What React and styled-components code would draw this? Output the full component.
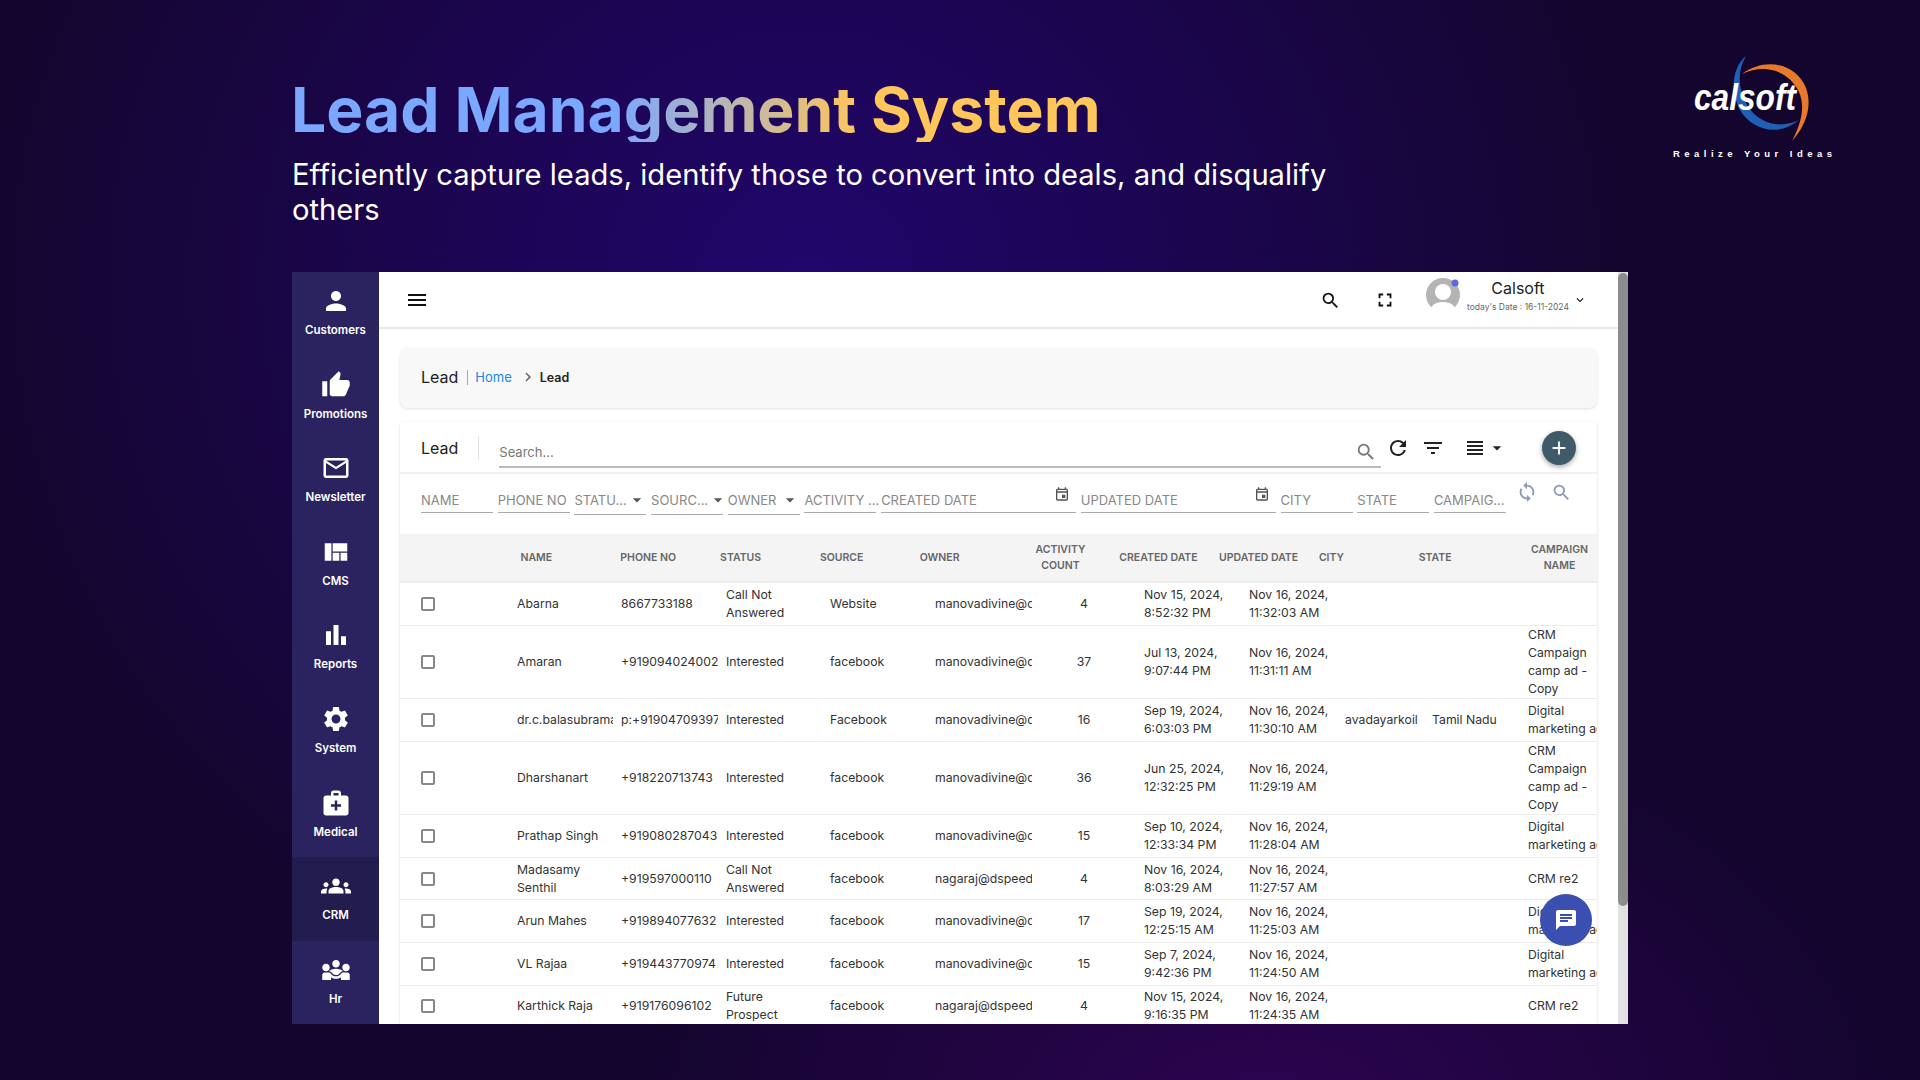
import React from "react"
import styled, { createGlobalStyle } from "styled-components"
import {
  MdMenu, MdSearch, MdFullscreen, MdKeyboardArrowDown, MdChevronRight, MdRefresh, MdFilterList,
  MdViewHeadline, MdArrowDropDown, MdAdd, MdSync, MdPerson, MdThumbUp, MdMailOutline, MdViewQuilt,
  MdBarChart, MdSettings, MdMedicalServices, MdGroups, MdDiversity3, MdChat, MdOutlineEvent,
} from "react-icons/md"

const GlobalStyle = createGlobalStyle`
  * { box-sizing: border-box; }
  body {
    margin: 0;
    font-family: Inter, "Liberation Sans", sans-serif;
    background: #14052f;
  }
`

const Page = styled.div`
  width: 1920px;
  height: 1080px;
  overflow: hidden;
  padding: 0 0 0 292px;
  background:
    radial-gradient(ellipse 620px 420px at 66% 104%, #2d0452 0%, rgba(45, 4, 82, 0) 100%),
    radial-gradient(ellipse 820px 760px at 42% 26%, #21066c 0%, rgba(33, 6, 108, 0) 100%),
    #14052f;
`
const Header = styled.header`
  height: 272px;
  display: flex;
  justify-content: space-between;
  align-items: flex-start;
`
const Intro = styled.div`
  padding-top: 78px;
  width: 1060px;
`
const Title = styled.h1`
  display: inline-block;
  margin: 0 0 0 -1px;
  font-size: 62.4px;
  line-height: 64px;
  font-weight: 700;
  color: transparent;
  background: linear-gradient(90deg, #7ba7ff 40%, #ffc65c 70%);
  -webkit-background-clip: text;
  background-clip: text;
`
const Subtitle = styled.p`
  margin: 15px 0 0;
  font-size: 29.15px;
  line-height: 35px;
  color: #fff;
`
const Logo = styled.svg`
  width: 240px;
  height: 150px;
  margin: 30px 40px 0 0;
  flex: none;
`
const Window = styled.div`
  position: relative;
  width: 1336px;
  height: 752px;
  display: flex;
  overflow: hidden;
  background: #fff;
`
const Sidebar = styled.nav`
  width: 87px;
  flex: none;
  background: #2b235f;
`
const SideItem = styled.div`
  height: 83.6px;
  display: flex;
  flex-direction: column;
  align-items: center;
  padding-top: 14px;
  color: #fff;
  background: ${(p) => (p.$active ? "#231c4e" : "transparent")};
  svg { font-size: 30px; }
  span {
    margin-top: 6px;
    font-size: 11.5px;
    line-height: 16px;
    font-weight: 600;
  }
`
const Main = styled.main`
  flex: 1;
  min-width: 0;
  overflow: hidden;
`
const Topbar = styled.div`
  height: 57px;
  display: flex;
  align-items: center;
  padding: 0 40px 0 26px;
  border-bottom: 2px solid #e8e8e8;
  color: #111;
`
const TopIcon = styled.div`
  display: flex;
  font-size: ${(p) => p.$size || 24}px;
  margin-left: ${(p) => p.$left || 0}px;
  padding-top: ${(p) => p.$drop || 0}px;
`
const Avatar = styled.svg`
  width: 36px;
  height: 32px;
  margin-left: 30px;
  margin-top: -12px;
  flex: none;
`
const User = styled.div`
  width: 102px;
  margin: -9px 0 0 5px;
  display: flex;
  flex-direction: column;
  align-items: center;
  b {
    font-size: 16px;
    line-height: 20px;
    font-weight: 400;
    color: #222;
  }
  span {
    margin-top: 3px;
    font-size: 8.5px;
    line-height: 12px;
    white-space: nowrap;
    color: #666;
  }
`
const Content = styled.div`
  padding: 19px 21px 0;
`
const Crumbs = styled.div`
  height: 60px;
  display: flex;
  align-items: center;
  padding: 0 0 2px 21px;
  background: #f8f8f8;
  border-radius: 8px;
  box-shadow: 0 1px 3px rgba(0, 0, 0, 0.12);
  color: #222;
  font-size: 16px;
`
const CrumbHome = styled.span`
  margin-left: 7px;
  font-size: 13px;
  color: #2186e6;
`
const CrumbSep = styled.i`
  width: 1px;
  height: 15px;
  margin-left: 9px;
  background: #aaa;
`
const CrumbArrow = styled.div`
  display: flex;
  margin-left: 7px;
  font-size: 18px;
  color: #666;
`
const CrumbNow = styled.b`
  margin-left: 3px;
  font-size: 12.5px;
  font-weight: 600;
`
const Card = styled.section`
  margin-top: 14px;
  background: #fff;
  box-shadow: 0 1px 3px rgba(0, 0, 0, 0.16);
  border-radius: 4px 4px 0 0;
`
const Toolbar = styled.div`
  height: 52px;
  display: flex;
  align-items: center;
  padding: 2px 0 0 21px;
  border-bottom: 2px solid #f0f0f0;
  color: #222;
  font-size: 16px;
`
const ToolDivider = styled.i`
  width: 1px;
  height: 24px;
  margin: 0 20px;
  background: #e6e6e6;
`
const SearchBox = styled.div`
  width: 882px;
  height: 30px;
  margin-top: 9px;
  display: flex;
  align-items: center;
  justify-content: space-between;
  padding-right: 4px;
  border-bottom: 2px solid #bbb;
  font-size: 13px;
  color: #777;
  svg { font-size: 22px; }
`
const ToolIcon = styled.div`
  display: flex;
  color: #222;
  font-size: ${(p) => p.$size || 24}px;
  margin-left: ${(p) => p.$left || 0}px;
`
const AddButton = styled.button`
  width: 34px;
  height: 34px;
  margin-left: 35px;
  padding: 0;
  display: flex;
  align-items: center;
  justify-content: center;
  border: 0;
  border-radius: 50%;
  background: #3f5a68;
  color: #fff;
  font-size: 22px;
  box-shadow: 0 2px 5px rgba(0, 0, 0, 0.35);
`
const Filters = styled.div`
  height: 60px;
  display: flex;
  gap: 4.7px;
  padding: 16px 0 0 21px;
`
const Field = styled.div`
  width: ${(p) => (p.$wide ? 195 : 72)}px;
  height: ${(p) => (p.$select ? 25 : 23)}px;
  flex: none;
  display: flex;
  align-items: flex-start;
  justify-content: space-between;
  border-bottom: 1px solid #aaa;
  font-size: 13px;
  line-height: 20px;
  color: #888;
  white-space: nowrap;
  svg { flex: none; color: #555; }
`
const FieldDate = styled(Field)`
  svg { margin: -4px 6px 0 0; font-size: 16px; }
`
const FieldActions = styled.div`
  margin: -9px 0 0 5px;
  display: flex;
  align-items: center;
  align-self: flex-start;
  gap: 13px;
  color: #8a9bb3;
  svg { display: block; }
`
const Head = styled.div`
  height: 49px;
  padding-left: 120.5px;
  display: grid;
  grid-template-columns: repeat(11, 99.8px);
  align-items: center;
  background: #f4f4f4;
  border-bottom: 2px solid #ececec;
`
const HeadCell = styled.div`
  width: ${(p) => (p.$center ? "82px" : "auto")};
  text-align: ${(p) => (p.$center ? "center" : "left")};
  font-size: 10.5px;
  line-height: 16px;
  font-weight: 600;
  color: #666;
  white-space: pre;
`
const Row = styled.div`
  min-height: 42.6px;
  padding: 0.25px 0;
  display: grid;
  grid-template-columns: 109px 104px 105px 104px 105px 105px 104px 105px 96px 87px 96px 77px;
  align-items: center;
  border-bottom: 1px solid #ececec;
`
const Check = styled.i`
  display: block;
  width: 14px;
  height: 14px;
  margin-left: 21px;
  border: 2px solid #888;
  border-radius: 2px;
`
const Cell = styled.div`
  padding-left: ${(p) => (p.$center ? 0 : 8)}px;
  text-align: ${(p) => (p.$center ? "center" : "left")};
  font-size: 12.25px;
  line-height: 18px;
  color: #333;
  white-space: pre;
  overflow: hidden;
`
const Scrollbar = styled.div`
  width: 10px;
  flex: none;
  background: #e2e2e2;
`
const Thumb = styled.div`
  height: 633px;
  margin-top: 1px;
  border-radius: 5px;
  background: #8c8c8c;
`
const ChatButton = styled.div`
  position: absolute;
  left: 1248px;
  top: 622px;
  width: 52px;
  height: 52px;
  display: flex;
  align-items: center;
  justify-content: center;
  border-radius: 50%;
  background: #3b4fb0;
  color: #fff;
  font-size: 24px;
`

const sideItems = [
  [MdPerson, "Customers"],
  [MdThumbUp, "Promotions"],
  [MdMailOutline, "Newsletter"],
  [MdViewQuilt, "CMS"],
  [MdBarChart, "Reports"],
  [MdSettings, "System"],
  [MdMedicalServices, "Medical"],
  [MdGroups, "CRM", true],
  [MdDiversity3, "Hr"],
]

const filters = [
  ["NAME"], ["PHONE NO"], ["STATU...", "select"], ["SOURC...", "select"], ["OWNER", "select"], ["ACTIVITY ..."],
  ["CREATED DATE", "date"], ["UPDATED DATE", "date"], ["CITY"], ["STATE"], ["CAMPAIG..."],
]

const heads = [
  ["NAME"], ["PHONE NO"], ["STATUS"], ["SOURCE"], ["OWNER"], ["ACTIVITY\nCOUNT", true],
  ["CREATED DATE"], ["UPDATED DATE"], ["CITY"], ["STATE"], ["CAMPAIGN\nNAME", true],
]

const MANO = "manovadivine@dspeedup.com"
const NAGA = "nagaraj@dspeedup.com"
const COPY = "CRM\nCampaign\ncamp ad -\nCopy"
const DIGI = "Digital\nmarketing ad"
const CNA = "Call Not\nAnswered"

const rows = [
  ["Abarna", "8667733188", CNA, "Website", MANO, "4", "Nov 15, 2024,\n8:52:32 PM", "Nov 16, 2024,\n11:32:03 AM", "", "", ""],
  ["Amaran", "+919094024002", "Interested", "facebook", MANO, "37", "Jul 13, 2024,\n9:07:44 PM", "Nov 16, 2024,\n11:31:11 AM", "", "", COPY],
  ["dr.c.balasubramanian", "p:+919047093971", "Interested", "Facebook", MANO, "16", "Sep 19, 2024,\n6:03:03 PM", "Nov 16, 2024,\n11:30:10 AM", "avadayarkoil", "Tamil Nadu", DIGI],
  ["Dharshanart", "+918220713743", "Interested", "facebook", MANO, "36", "Jun 25, 2024,\n12:32:25 PM", "Nov 16, 2024,\n11:29:19 AM", "", "", COPY],
  ["Prathap Singh", "+919080287043", "Interested", "facebook", MANO, "15", "Sep 10, 2024,\n12:33:34 PM", "Nov 16, 2024,\n11:28:04 AM", "", "", DIGI],
  ["Madasamy\nSenthil", "+919597000110", CNA, "facebook", NAGA, "4", "Nov 16, 2024,\n8:03:29 AM", "Nov 16, 2024,\n11:27:57 AM", "", "", "CRM re2"],
  ["Arun Mahes", "+919894077632", "Interested", "facebook", MANO, "17", "Sep 19, 2024,\n12:25:15 AM", "Nov 16, 2024,\n11:25:03 AM", "", "", DIGI],
  ["VL Rajaa", "+919443770974", "Interested", "facebook", MANO, "15", "Sep 7, 2024,\n9:42:36 PM", "Nov 16, 2024,\n11:24:50 AM", "", "", DIGI],
  ["Karthick Raja", "+919176096102", "Future\nProspect", "facebook", NAGA, "4", "Nov 15, 2024,\n9:16:35 PM", "Nov 16, 2024,\n11:24:35 AM", "", "", "CRM re2"],
]

const App = () => (
  <Page>
    <GlobalStyle />
    <Header>
      <Intro>
        <Title>Lead Management System</Title>
        <Subtitle>Efficiently capture leads, identify those to convert into deals, and disqualify others</Subtitle>
      </Intro>
      <Logo viewBox="0 0 240 150">
        <path d="M106 26C92 37 90 62 100 80C111 99 137 108 159 90C138 100 117 92 107 75C98 59 97 41 106 26Z" fill="#1f5fb4" />
        <path d="M102 44C125 27 156 33 166 58C173 77 165 97 152 111C160 96 166 78 159 62C149 41 125 33 102 44Z" fill="#e8782a" />
        <text x="54" y="80" fill="#fff" fontFamily="Liberation Sans" fontWeight="700" fontStyle="italic" fontSize="36" textLength="102" lengthAdjust="spacingAndGlyphs">calsoft</text>
        <text x="33" y="127" fill="#fff" fontFamily="Liberation Sans" fontWeight="700" fontSize="9.5" textLength="159">Realize Your Ideas</text>
      </Logo>
    </Header>
    <Window>
      <Sidebar>
        {sideItems.map(([Icon, label, active]) => (
          <SideItem key={label} $active={active}>
            <Icon />
            <span>{label}</span>
          </SideItem>
        ))}
      </Sidebar>
      <Main>
        <Topbar>
          <TopIcon><MdMenu /></TopIcon>
          <TopIcon $size={21} $left={891} $drop={1}><MdSearch /></TopIcon>
          <TopIcon $size={22} $left={33}><MdFullscreen /></TopIcon>
          <Avatar viewBox="0 0 36 32">
            <circle cx="17" cy="17" r="17" fill="#b4b4b4" />
            <circle cx="17" cy="14" r="8" fill="#fff" />
            <path d="M5 30C8 22 26 22 29 30V32H5Z" fill="#fff" />
            <circle cx="29" cy="5" r="3.5" fill="#5a67e8" />
          </Avatar>
          <User>
            <b>Calsoft</b>
            <span>today's Date : 16-11-2024</span>
          </User>
          <TopIcon $size={14} $left={4}><MdKeyboardArrowDown /></TopIcon>
        </Topbar>
        <Content>
          <Crumbs>
            Lead
            <CrumbSep />
            <CrumbHome>Home</CrumbHome>
            <CrumbArrow><MdChevronRight /></CrumbArrow>
            <CrumbNow>Lead</CrumbNow>
          </Crumbs>
          <Card>
            <Toolbar>
              Lead
              <ToolDivider />
              <SearchBox>Search...<MdSearch /></SearchBox>
              <ToolIcon $left={5}><MdRefresh /></ToolIcon>
              <ToolIcon $left={11}><MdFilterList /></ToolIcon>
              <ToolIcon $left={18}><MdViewHeadline /></ToolIcon>
              <ToolIcon $size={20}><MdArrowDropDown /></ToolIcon>
              <AddButton><MdAdd /></AddButton>
            </Toolbar>
            <Filters>
              {filters.map(([label, kind]) =>
                kind === "date" ? (
                  <FieldDate key={label} $wide>{label}<MdOutlineEvent /></FieldDate>
                ) : (
                  <Field key={label} $select={kind === "select"}>
                    {label}
                    {kind === "select" && <MdArrowDropDown size={20} />}
                  </Field>
                )
              )}
              <FieldActions><MdSync size={22} /><MdSearch size={21} /></FieldActions>
            </Filters>
            <Head>
              {heads.map(([label, center]) => (
                <HeadCell key={label} $center={center}>{label}</HeadCell>
              ))}
            </Head>
            {rows.map((row) => (
              <Row key={row[0]}>
                <Check />
                {row.map((text, i) => (
                  <Cell key={i} $center={i === 5}>{text}</Cell>
                ))}
              </Row>
            ))}
          </Card>
        </Content>
      </Main>
      <Scrollbar><Thumb /></Scrollbar>
      <ChatButton><MdChat /></ChatButton>
    </Window>
  </Page>
)

export default App
